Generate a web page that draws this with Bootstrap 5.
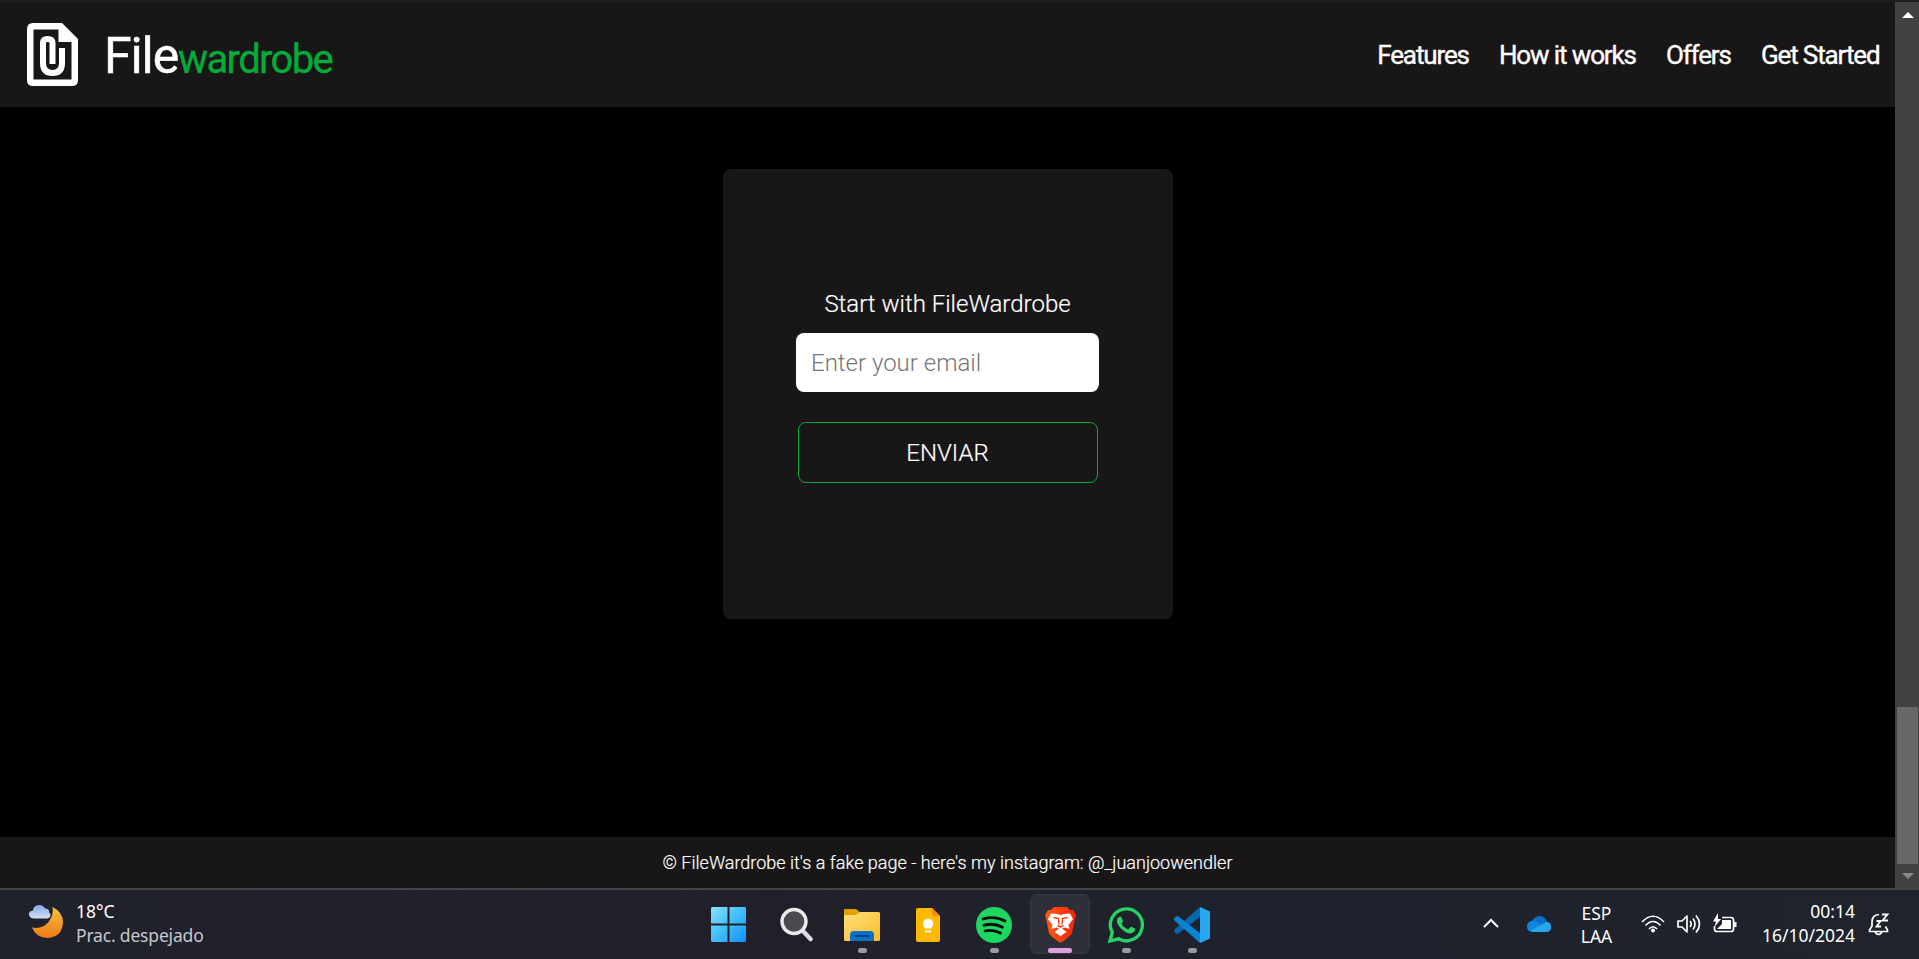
<!DOCTYPE html>
<html lang="es">
<head>
<meta charset="utf-8">
<title>FileWardrobe</title>
<link href="https://cdn.jsdelivr.net/npm/bootstrap@5.3.0/dist/css/bootstrap.min.css" rel="stylesheet">
<style>
body{font-family:Roboto,sans-serif;background:#000;color:#fff;overflow:hidden}
.screen{height:959px;border-top:2px solid #1c1b22}
.site{width:1895px}
.topbar{height:105px;background:#181617;padding:0 15.5px 0 27px}
.brand-name{margin:2px 0 0 26px}
.brand-a{font-size:50px;letter-spacing:-1.1px;line-height:1;-webkit-text-stroke:.5px #fff}
.brand-b{font-size:40px;letter-spacing:-1.65px;line-height:1;color:#00ad3a;-webkit-text-stroke:.3px #00ad3a}
.links{gap:30px;font-size:26px;letter-spacing:-1.12px;-webkit-text-stroke:.4px #fff;padding-top:2px}
.links a,.foot a{color:#fff;text-decoration:none;white-space:nowrap}
.signup{width:450px;height:450px;background:#181617;border-radius:8px;margin-top:62px;font-weight:300;font-size:24px;padding-top:117px}
.signup label{line-height:36px;height:47px}
.signup label,.signup button,.foot{-webkit-text-stroke:.2px #fff}
.signup input{width:303px;height:59px;border:0;border-radius:8px;padding:0 15px;font-weight:300}
.signup input::placeholder{color:#757575}
.signup button{width:300px;height:61px;border:1px solid #00ad3a;border-radius:8px;background:none;color:#fff;font-weight:300;margin-top:30px}
.foot{height:51px;background:#181617;font-size:18px;font-weight:300;letter-spacing:.01px}
.scroller{width:24px;background:#424242;padding:0 1px 0 2px}
.thumb{height:157px;background:#686868;margin-top:auto}
.taskbar{height:71px;border-top:2px solid #444446;background:linear-gradient(90deg,#20222b,#211f29 36%,#20212b 50%,#1e222c 65%,#1f232c);display:grid;grid-template-columns:694px 531px 1fr;font-family:"Noto Sans",sans-serif;font-size:17.5px;line-height:24px}
.app{width:66px;height:69px;position:relative}
.app.start{width:69px}
.app i{position:absolute;left:50%;bottom:6px;width:9px;height:5px;margin-left:-4px;border-radius:3px;background:#9b9b9f}
.app.on::before{content:"";position:absolute;left:3px;top:4px;width:60px;height:60px;border-radius:7px;background:#2d3038;border:1px solid #363940}
.app.on i{width:24px;margin-left:-12px;background:#dda0e4}
.app svg{position:relative}
.dim{color:#c6c7ca;letter-spacing:-.18px}
svg{flex:none;display:block}
</style>
</head>
<body>
<div class="screen d-flex flex-column">
 <div class="d-flex flex-grow-1">
  <div class="site d-flex flex-column">
   <nav class="topbar d-flex align-items-center justify-content-between">
    <a class="d-flex align-items-center text-white text-decoration-none" href="#">
     <svg width="51" height="63" viewBox="0 0 51 63"><path d="M6 0H35L51 16V57Q51 63 45 63H6Q0 63 0 57V6Q0 0 6 0Z" fill="#fff"/><path d="M6.500 6.500H31.500V19H44.500V56.500H6.500Z" fill="#181617"/><path d="M16 19V40Q16 50 25.500 50Q35 50 35 40V25M16 20Q16 16 20.500 16Q25.500 16 25.500 20V41" fill="none" stroke="#fff" stroke-width="6"/></svg>
     <span class="brand-name d-flex align-items-baseline"><span class="brand-a">File</span><span class="brand-b">wardrobe</span></span>
    </a>
    <div class="links d-flex"><a href="#">Features</a><a href="#">How it works</a><a href="#">Offers</a><a href="#">Get Started</a></div>
   </nav>
   <main class="flex-grow-1 d-flex flex-column align-items-center">
    <form class="signup d-flex flex-column align-items-center">
     <label for="mail">Start with FileWardrobe</label>
     <input id="mail" type="email" placeholder="Enter your email">
     <button type="button">ENVIAR</button>
    </form>
   </main>
   <footer class="foot d-flex align-items-center justify-content-center"><span>© FileWardrobe it's a fake page - here's my instagram: <a href="#">@_juanjoowendler</a></span></footer>
  </div>
  <div class="scroller d-flex flex-column align-items-center">
   <svg width="12" height="6" viewBox="0 0 12 6" style="margin-top:10px"><path d="M0 6L6 0L12 6Z" fill="#fff"/></svg>
   <div class="thumb w-100"></div>
   <svg width="12" height="6" viewBox="0 0 12 6" style="margin:9px 0 9px"><path d="M0 0H12L6 6Z" fill="#8a8a8a"/></svg>
  </div>
 </div>
 <div class="taskbar">
  <div class="d-flex align-items-start" style="padding-left:28px">
   <svg width="36" height="35" viewBox="0 0 36 35" style="margin-top:14px"><defs><linearGradient id="mo" x2="0" y2="1"><stop stop-color="#f3c63b"/><stop offset="1" stop-color="#f07818"/></linearGradient><linearGradient id="cl" x2="0" y2="1"><stop stop-color="#82a9e8"/><stop offset="1" stop-color="#d3e0f7"/></linearGradient></defs><path d="M24.500 3Q35 8 35 18.500Q34 33.500 19 34Q8 33.500 4 23.500Q14 25.500 20.500 18Q26 11 24.500 3Z" fill="url(#mo)"/><path d="M5.500 14.500C0 14.500-1 7 5 6.500C6-.5 15-.5 17 4.500C20 4 22 7 21 8.500C24 10 22.500 14.500 19.500 14.500Z" fill="url(#cl)"/></svg>
   <div style="margin:9px 0 0 12px"><div>18°C</div><div class="dim">Prac. despejado</div></div>
  </div>
  <div class="d-flex">
   <div class="app start d-flex align-items-center justify-content-center"><svg width="35" height="35" viewBox="0 0 35 35"><defs><linearGradient id="wi" gradientUnits="userSpaceOnUse" x2="35" y2="35"><stop stop-color="#8be0fb"/><stop offset=".5" stop-color="#40bffa"/><stop offset="1" stop-color="#0f91f8"/></linearGradient></defs><path d="M1 0H16.500V16.500H0V1ZM18.500 0H34L35 1V16.500H18.500ZM0 18.500H16.500V35H1L0 34ZM18.500 18.500H35V34L34 35H18.500Z" fill="url(#wi)"/></svg></div>
   <div class="app d-flex align-items-center justify-content-center"><svg width="33" height="35" viewBox="0 0 33 35"><path d="M23 24L30.500 32" stroke="#dadde0" stroke-width="4.500" stroke-linecap="round"/><circle cx="14" cy="14.500" r="12" fill="#4a4b50" stroke="#e9ebec" stroke-width="3.400"/></svg></div>
   <div class="app d-flex align-items-center justify-content-center"><svg width="36" height="34" viewBox="0 0 36 34"><defs><linearGradient id="fo" x2="1" y2="1"><stop stop-color="#ffe07c"/><stop offset="1" stop-color="#fcbc2c"/></linearGradient></defs><path d="M0 10V2Q0 1 1 1H11Q13 1 14.500 3L16 4.500H28V10Z" fill="#e0a000"/><path d="M0 7H11Q13 7 15 4.500Q15.500 4 17 4H35L36 5V32L35 33H1L0 32Z" fill="url(#fo)"/><path d="M6 33V27Q6 23 10 23H26Q30 23 30 27V33Z" fill="#0a71c6"/><path d="M10.500 28H25.500" stroke="#043f81" stroke-width="1.800"/></svg><i></i></div>
   <div class="app d-flex align-items-center justify-content-center"><svg width="24" height="34" viewBox="0 0 24 34"><path d="M2 0H16L24 8V32Q24 34 22 34H2Q0 34 0 32V2Q0 0 2 0Z" fill="#fdb800"/><path d="M16 0L24 8H16Z" fill="#fb8c00"/><path d="M8.500 20.500V19.500A5.200 5.200 0 1 1 15.500 19.500V20.500ZM9 22.500H15V24.500H9Z" fill="#fff"/></svg></div>
   <div class="app d-flex align-items-center justify-content-center"><svg width="36" height="36" viewBox="0 0 36 36"><circle cx="18" cy="18" r="18" fill="#1ed760"/><path d="M7 12Q19 8.500 29 14M8 18.300Q18 15.500 26.500 20.300M9 24Q17 22 24.500 26" fill="none" stroke="#0b0d0c" stroke-linecap="round" stroke-width="2.800"/></svg><i></i></div>
   <div class="app on d-flex align-items-center justify-content-center"><svg width="31" height="36" viewBox="0 0 31 36"><defs><linearGradient id="br"><stop stop-color="#ff5a14"/><stop offset="1" stop-color="#fb2408"/></linearGradient></defs><path d="M9 0H22L25 3L28 3L31 8L30 11L27 26Q26 29 15.500 36Q5 29 4 26L1 11L0 8L3 3L6 3Z" fill="url(#br)"/><path d="M6 6.500L12 7L15.500 8L19 7L25 6.500L28 12L23.500 18L24.500 22L19.500 20.500L17 21.500L21.500 25L15.500 29L9.500 25L14 21.500L11.500 20.500L6.500 22L7.500 18L3 12Z" fill="#fff"/><path d="M8.500 10.500L13.500 11.500L14 17.500M22.500 10.500L17.500 11.500L17 17.500M12.500 18.500L15.500 20L18.500 18.500" fill="none" stroke="#fb3b0d" stroke-width="1.400"/></svg><i></i></div>
   <div class="app d-flex align-items-center justify-content-center"><svg width="36" height="36" viewBox="0 0 36 36"><path d="M2 34L4.300 25.500A16 16 0 1 1 10.500 31.800Z" fill="none" stroke="#25d366" stroke-width="3.300"/><path d="M11 10Q12.500 9 13.500 10.500L15 14Q15 15 13.500 16.500Q15.500 21 20.500 22.500L22.500 20Q23 19.500 24 20L27 21.500Q27.500 25.500 22.500 26.500Q18 26.500 13 21.500Q8 16 9 13Q9.500 11 11 10Z" fill="#25d366"/></svg><i></i></div>
   <div class="app d-flex align-items-center justify-content-center"><svg width="36" height="36" viewBox="0 0 36 36"><path d="M26 0V10L4.500 26.500Q3 27.500 1.500 26L.5 25Q-.5 23.500 1 22Z" fill="#0968a9"/><path d="M26 36V26L4.500 9.500Q3 8.500 1.500 10L.5 11Q-.5 12.500 1 14Z" fill="#0b84cf"/><path d="M26 0L36 4.500V31.500L26 36Z" fill="#29a8f0"/></svg><i></i></div>
  </div>
  <div class="d-flex align-items-start" style="padding-left:258px">
   <svg width="16" height="10" viewBox="0 0 16 10" style="margin-top:28px"><path d="M1 9L8 2L15 9" fill="none" stroke="#fff" stroke-width="2"/></svg>
   <svg width="24" height="16" viewBox="0 0 24 16" style="margin:26px 0 0 28px"><path d="M6 16Q0 15.500 0 10Q0 6 5 5Q8 0 12.500 0Q18 0 19.500 5.500Q24 6 24 11Q24 16 19 16Z" fill="#0a6fc9"/><path d="M5 5Q9 4.500 14 8.500L4 15.500Q0 15 0 10Q0 6 5 5Z" fill="#0f85dd"/><path d="M3 14.500L14 9L19 6Q24 6 24 11Q24 16 19 16H6Z" fill="#29a7ec"/></svg>
   <div class="text-center" style="margin:12px 0 0 26px;width:39px;line-height:23px">ESP<br>LAA</div>
   <svg width="24" height="18" viewBox="0 0 24 18" style="margin:25px 0 0 25px"><path d="M1 7Q12-4.500 23 7M4.500 10.500Q12 2.500 19.500 10.500M8 14Q12 9.500 16 14" fill="none" stroke="#fff" stroke-width="1.700"/><circle cx="12" cy="15.500" r="2" fill="#fff"/></svg>
   <svg width="24" height="20" viewBox="0 0 24 20" style="margin:24px 0 0 12px"><path d="M1 7H5L10 2V18L5 13H1ZM13 7Q15.500 10 13 13M16 4.500Q20 10 16 15.500M19 1.500Q26 10 19 18.500" fill="none" stroke="#fff" stroke-width="1.700" stroke-linejoin="round"/></svg>
   <svg width="24" height="20" viewBox="0 0 24 20" style="margin:23px 0 0 12px"><path d="M9 4.500H18Q20.500 4.500 20.500 7V16Q20.500 18.500 18 18.500H4Q1.500 18.500 1.500 16V13" fill="none" stroke="#fff" stroke-width="1.700"/><path d="M9 7H18V16H4L9 11ZM21 9H23.500V14H21ZM5 0L0 8.500H3L1.500 14L8 6H5Z" fill="#fff"/></svg>
   <div class="text-end" style="margin:9px 0 0 14px;width:104px;white-space:nowrap">00:14<br>16/10/2024</div>
   <svg width="22" height="23" viewBox="0 0 22 23" style="margin:23px 0 0 13px"><path d="M11 1.500Q4 2 4 9V13L1.500 17V18.500H19.500V17L17.500 13.500M7 19Q10.500 24 14 19" fill="none" stroke="#fff" stroke-width="1.700"/><path d="M14 1.500H19.500L14.500 7.500H20M8.500 8H12.500L8.500 13.500H13" fill="none" stroke="#fff" stroke-width="1.800"/></svg>
  </div>
 </div>
</div>
<script src="https://cdn.jsdelivr.net/npm/bootstrap@5.3.0/dist/js/bootstrap.bundle.min.js"></script>
</body>
</html>
